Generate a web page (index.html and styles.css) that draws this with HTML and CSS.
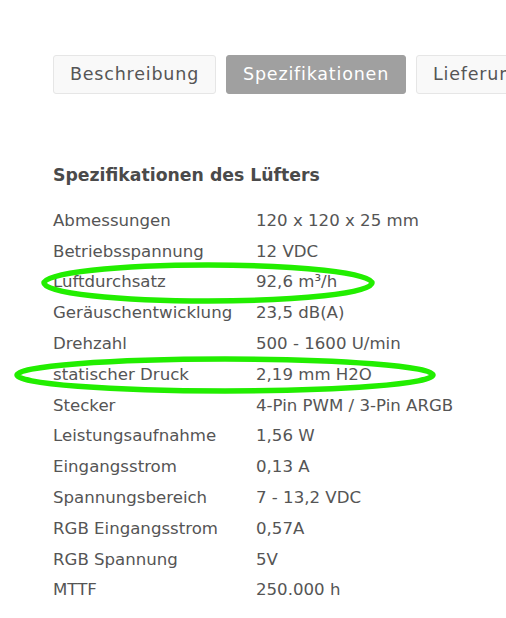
FILE: index.html
```html
<!DOCTYPE html>
<html lang="de">
<head>
    <meta charset="UTF-8">
    <meta name="viewport" content="width=device-width, initial-scale=1.0">
    <title>Spezifikationen</title>
    <link rel="stylesheet" href="styles.css">
</head>
<body>

    <div class="page">
        <div class="tabs">
            <div class="tab">Beschreibung</div>
            <div class="tab active">Spezifikationen</div>
            <div class="tab">Lieferumfang</div>
        </div>

        <div class="specs">
            <h2 class="specs-title">Spezifikationen des Lüfters</h2>

            <div class="spec-table">
                <div class="label">Abmessungen</div><div class="value">120 x 120 x 25 mm</div>
                <div class="label">Betriebsspannung</div><div class="value">12 VDC</div>
                <div class="label">Luftdurchsatz</div><div class="value">92,6 m³/h</div>
                <div class="label">Geräuschentwicklung</div><div class="value">23,5 dB(A)</div>
                <div class="label">Drehzahl</div><div class="value">500 - 1600 U/min</div>
                <div class="label">statischer Druck</div><div class="value">2,19 mm H2O</div>
                <div class="label">Stecker</div><div class="value">4-Pin PWM / 3-Pin ARGB</div>
                <div class="label">Leistungsaufnahme</div><div class="value">1,56 W</div>
                <div class="label">Eingangsstrom</div><div class="value">0,13 A</div>
                <div class="label">Spannungsbereich</div><div class="value">7 - 13,2 VDC</div>
                <div class="label">RGB Eingangsstrom</div><div class="value">0,57A</div>
                <div class="label">RGB Spannung</div><div class="value">5V</div>
                <div class="label">MTTF</div><div class="value">250.000 h</div>
            </div>
        </div>

        <!-- markierungen -->
        <svg class="marks" width="506" height="618" viewBox="0 0 506 618">
            <ellipse cx="208" cy="283" rx="164" ry="18" fill="none" stroke="#22ee00" stroke-width="5.5"/>
            <ellipse cx="225" cy="375" rx="208" ry="16" fill="none" stroke="#22ee00" stroke-width="5.5"/>
        </svg>
    </div>

</body>
</html>
```

FILE: styles.css
```css
html, body {
    margin: 0;
    padding: 0;
    background-color: #fff;
    overflow: hidden;
}

body {
    font-family: "DejaVu Sans", sans-serif;
    color: #555;
}

.page {
    position: relative;
    width: 506px;
    height: 618px;
    overflow: hidden;
    padding: 55px 0 0 53px;
    box-sizing: border-box;
}

.tabs {
    display: flex;
    gap: 10px;
    white-space: nowrap;
}

.tab {
    flex: none;
    height: 37px;
    line-height: 37px;
    padding: 0 16px;
    font-size: 17.5px;
    letter-spacing: 0.8px;
    color: #555;
    background-color: #f9f9f9;
    border: 1px solid #e6e6e6;
    border-radius: 3px;
}

.tab.active {
    color: #fff;
    background-color: #a0a0a0;
    border-color: #a0a0a0;
}

.specs {
    margin-top: 69px;
}

.specs-title {
    margin: 0 0 18px 0;
    font-size: 17.3px;
    line-height: 24px;
    font-weight: bold;
    color: #4a4a4a;
}

.spec-table {
    display: grid;
    grid-template-columns: 203px auto;
    grid-auto-rows: 30.8px;
    align-items: center;
    font-size: 16.6px;
}

.label, .value {
    white-space: nowrap;
}

.marks {
    position: absolute;
    left: 0;
    top: 0;
    pointer-events: none;
}
```
